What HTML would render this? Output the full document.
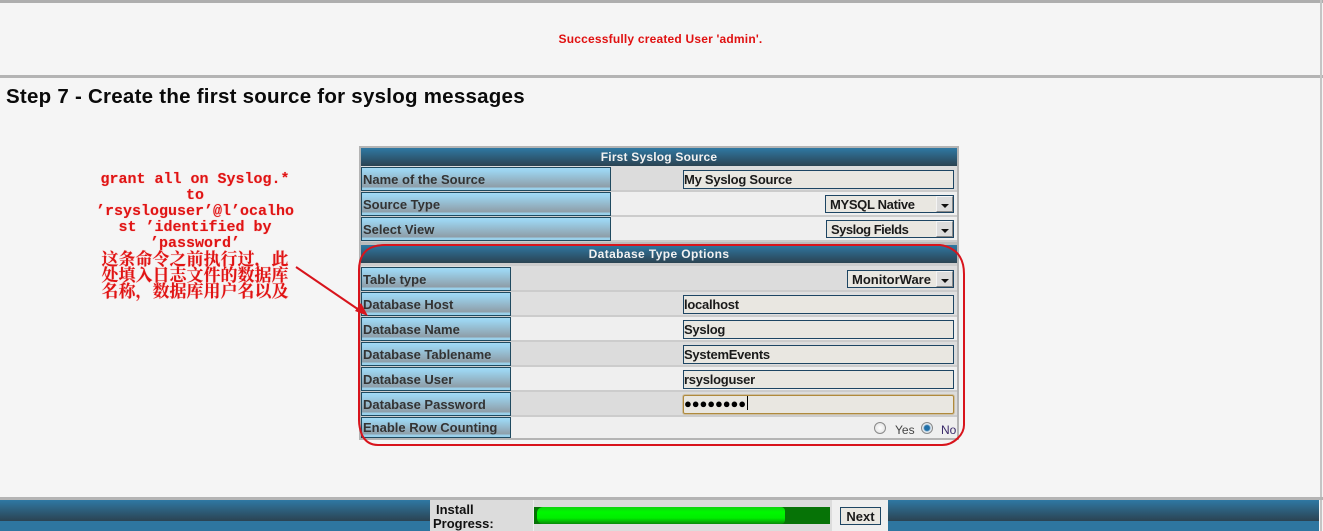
<!DOCTYPE html>
<html>
<head>
<meta charset="utf-8">
<style>
html,body{margin:0;padding:0;width:1323px;height:531px;overflow:hidden;background:#f5f5f5;}
body{position:relative;font-family:"Liberation Sans",Arial,sans-serif;}
div,span.a{position:absolute;box-sizing:border-box;white-space:nowrap;}
.hd{left:361px;width:596px;height:18px;background:linear-gradient(#2f78a3,#2b4352);color:#f2f2f2;font:bold 12px/19px "Liberation Sans",sans-serif;text-align:center;}
.row{left:361px;width:596px;border-bottom:2px solid #ccc;}
.lb{left:361px;height:24px;border:1px solid #1f4a60;background:linear-gradient(#a2daf5 0,#9cd3ee 14%,#8e9ca6 88%,#9ad0ea 88%,#9ad0ea 100%) no-repeat;color:#333;font:bold 13px/23px "Liberation Sans",sans-serif;padding-left:1px;}
.in{left:683px;width:271px;height:19px;background:#e9e7e1;border:1px solid #1d4563;color:#1a1a1a;font:bold 13px/17px "Liberation Sans",sans-serif;padding-left:0;letter-spacing:-.25px;}
.sel{height:18px;background:#e9e7e1;border:1px solid #1d4563;color:#1a1a1a;font:bold 13px/17px "Liberation Sans",sans-serif;padding-left:4px;}
.ar{right:0;top:0;width:17px;height:16px;background:#dcdcdc;border:1px solid #f4f4f4;border-right-color:#888;border-bottom-color:#888;}
.ar:after{content:"";position:absolute;left:4px;top:7px;border:4px solid transparent;border-top:4px solid #111;border-bottom:0;}
.red{left:90px;width:210px;text-align:center;color:#e01414;font:bold 15px/16px "Liberation Mono",monospace;text-shadow:0 0 1px #f59a9a;}
.cjk{left:90px;width:210px;text-align:center;color:#e01414;font:bold 17px/16px "Noto Serif CJK SC","Liberation Serif",serif;text-shadow:0 0 1px #f59a9a;}
.cm{display:inline-block;width:17px;text-align:left;}
.rd{width:12px;height:12px;border-radius:50%;border:1px solid #8a8a8a;background:radial-gradient(#fff,#ddd);}
</style>
</head>
<body>
<div style="left:0;top:0;width:1323px;height:3px;background:#aeaeae"></div>
<div style="left:0;top:75px;width:1323px;height:3px;background:#b4b4b4"></div>
<div style="left:1320px;top:0;width:2px;height:531px;background:#c4c4c4"></div>

<div style="left:-1px;width:1323px;top:32px;text-align:center;color:#e01010;font:bold 12px/15px 'Liberation Sans',sans-serif;letter-spacing:.2px;">Successfully created User 'admin'.</div>
<div style="left:6px;top:85px;color:#0a0a0a;font:bold 20.5px/24px 'Liberation Sans',sans-serif;letter-spacing:.25px;">Step 7 - Create the first source for syslog messages</div>

<!-- Table -->
<div style="left:359px;top:146px;width:600px;height:294px;background:#e2e2e2;border:2px solid #b4b4b4;border-right-width:2px"></div>
<div class="hd" style="top:148px;letter-spacing:.2px">First Syslog Source</div>
<div class="row" style="top:166px;height:26px;background:#dcdcdc"></div>
<div class="row" style="top:192px;height:25px;background:#efefef"></div>
<div class="row" style="top:217px;height:25px;background:#efefef"></div>
<div style="left:361px;top:242px;width:596px;height:3px;background:#bbb"></div>
<div class="hd" style="top:245px;letter-spacing:.4px">Database Type Options</div>
<div style="left:361px;top:263px;width:596px;height:3px;background:#ccc"></div>
<div class="row" style="top:266px;height:26px;background:#dcdcdc"></div>
<div class="row" style="top:292px;height:25px;background:#dfdfdf"></div>
<div class="row" style="top:317px;height:25px;background:#efefef"></div>
<div class="row" style="top:342px;height:25px;background:#dcdcdc"></div>
<div class="row" style="top:367px;height:25px;background:#efefef"></div>
<div class="row" style="top:392px;height:25px;background:#dcdcdc"></div>
<div style="left:361px;top:417px;width:596px;height:21px;background:#efefef"></div>

<div class="lb" style="top:167px;width:250px">Name of the Source</div>
<div class="lb" style="top:192px;width:250px">Source Type</div>
<div class="lb" style="top:217px;width:250px">Select View</div>
<div class="lb" style="top:267px;width:150px">Table type</div>
<div class="lb" style="top:292px;width:150px">Database Host</div>
<div class="lb" style="top:317px;width:150px">Database Name</div>
<div class="lb" style="top:342px;width:150px">Database Tablename</div>
<div class="lb" style="top:367px;width:150px">Database User</div>
<div class="lb" style="top:392px;width:150px">Database Password</div>
<div class="lb" style="top:417px;width:150px;height:21px;line-height:19px">Enable Row Counting</div>

<div class="in" style="top:170px">My Syslog Source</div>
<div class="sel" style="left:825px;top:195px;width:129px;letter-spacing:-.33px">MYSQL Native<div class="ar"></div></div>
<div class="sel" style="left:826px;top:220px;width:128px;letter-spacing:-.5px">Syslog Fields<div class="ar"></div></div>
<div class="sel" style="left:847px;top:270px;width:107px">MonitorWare<div class="ar"></div></div>
<div class="in" style="top:295px">localhost</div>
<div class="in" style="top:320px">Syslog</div>
<div class="in" style="top:345px">SystemEvents</div>
<div class="in" style="top:370px">rsysloguser</div>
<div class="in" style="top:395px;border:1px solid #b08a3c;box-shadow:0 0 0 1px rgba(176,138,60,.35);border-radius:2px;color:#000;font-size:13px;letter-spacing:-.1px;line-height:16px;padding-left:0">●●●●●●●●<span style="display:inline-block;width:1px;height:14px;background:#000;vertical-align:-2px;margin-left:1px"></span></div>

<div class="rd" style="left:874px;top:422px"></div>
<div style="left:895px;top:423px;color:#444;font:12px/14px 'Liberation Sans',sans-serif">Yes</div>
<div class="rd" style="left:921px;top:422px;background:radial-gradient(#1f6fa8 0,#1f6fa8 35%,#dfe8f0 55%,#eee)"></div>
<div style="left:941px;top:423px;color:#3a2a6a;font:12px/14px 'Liberation Sans',sans-serif">No</div>

<!-- Annotation text -->
<div class="red" style="top:172px">grant all on Syslog.*</div>
<div class="red" style="top:188px">to</div>
<div class="red" style="top:204px">’rsysloguser’@l’ocalho</div>
<div class="red" style="top:220px">st ’identified by</div>
<div class="red" style="top:236px">’password’</div>
<div class="cjk" style="top:250px">这条命令之前执行过<span class="cm">&#xFF0C;</span>此</div>
<div class="cjk" style="top:266px">处填入日志文件的数据库</div>
<div class="cjk" style="top:282px">名称<span class="cm">&#xFF0C;</span>数据库用户名以及</div>

<!-- Red drawing -->
<svg style="position:absolute;left:0;top:0" width="1323" height="531" viewBox="0 0 1323 531">
<path d="M385 245 H940 C948 246 956 250 960 257 C963 262 964 268 964 274 V425 C964 430 962 434 958 438 C953 443 948 445 942 445 H378 C370 445 365 441 362 435 C360 430 359 426 359 420 V270 C359 262 361 255 367 250 C372 246 378 245 385 245 Z" fill="none" stroke="#d8141c" stroke-width="2"/>
<path d="M296 267 L362 312" fill="none" stroke="#d8141c" stroke-width="2"/>
<path d="M368 316 L355 311 L361 303 Z" fill="#d8141c"/>
</svg>

<!-- Footer -->
<div style="left:0;top:497px;width:1323px;height:3px;background:#b4b4b4"></div>
<div style="left:0;top:500px;width:1319px;height:31px;background:linear-gradient(#2f78a3 0,#2b4352 21px,#2e76a0 21px,#2e76a0 100%)"></div>
<div style="left:430px;top:500px;width:103px;height:31px;background:#dcdcdc"></div>
<div style="left:436px;top:503px;color:#111;font:bold 13px/14px 'Liberation Sans',sans-serif">Install</div>
<div style="left:433px;top:517px;color:#111;font:bold 13px/14px 'Liberation Sans',sans-serif">Progress:</div>
<div style="left:533px;top:500px;width:299px;height:31px;background:#dcdcdc;border-left:1px solid #eee"></div>
<div style="left:534px;top:507px;width:296px;height:17px;background:#067306"></div>
<div style="left:537px;top:507px;width:248px;height:17px;border-radius:6px 4px 4px 6px;background:linear-gradient(#0fd40f 0,#00f800 30%,#00ee00 65%,#058a05 100%)"></div>
<div style="left:832px;top:500px;width:56px;height:31px;background:#efefef"></div>
<div style="left:840px;top:507px;width:41px;height:18px;background:#e9e7e1;border:1px solid #1d4563;color:#1a1a1a;text-align:center;font:bold 13px/17px 'Liberation Sans',sans-serif">Next</div>
</body>
</html>
